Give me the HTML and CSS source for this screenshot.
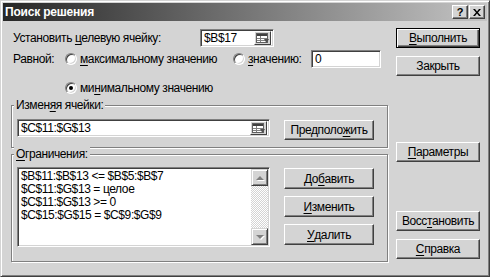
FILE: index.html
```html
<!DOCTYPE html>
<html lang="ru">
<head>
<meta charset="UTF-8">
<title>Поиск решения</title>
<link rel="stylesheet" href="styles.css">
</head>
<body>

<div class="window">
  <div class="titlebar">
    <span class="title">Поиск решения</span>
    <div class="title-buttons">
      <span class="tbtn tbtn-help">?</span>
      <span class="tbtn">
        <svg width="8" height="7" viewBox="0 0 8 7"><path d="M0 0h2l2 2.5L6 0h2L5 3.5 8 7H6L4 4.5 2 7H0l3-3.5z" fill="#000"/></svg>
      </span>
    </div>
  </div>

  <div class="dialog-body">
    <div class="main">
      <div class="row row-target">
        <label class="lbl-target">Установить <u>ц</u>елевую ячейку:</label>
        <div class="field field-target">
          <span class="field-text">$B$17</span>
          <span class="refbtn">
            <svg width="14" height="11" viewBox="0 0 14 11">
              <rect x="0.5" y="0.5" width="11" height="9" fill="#fff" stroke="#606060"/>
              <rect x="1" y="1" width="10" height="2" fill="#404040"/>
              <path d="M1 5.5h10M1 7.5h10M4.5 3v6" stroke="#808080"/>
              <path d="M8 6l5 0-2.5 4z" fill="#505050"/>
            </svg>
          </span>
        </div>
      </div>

      <div class="row row-equal">
        <span class="lbl-equal">Равной:</span>
        <span class="radio"></span>
        <span class="opt opt-max"><u>м</u>аксимальному значению</span>
        <span class="radio"></span>
        <span class="opt opt-value"><u>з</u>начению:</span>
        <div class="field field-value"><span class="field-text">0</span></div>
      </div>

      <div class="row row-min">
        <span class="radio checked"></span>
        <span class="opt">ми<u>н</u>имальному значению</span>
      </div>

      <div class="group group-cells">
        <div class="group-title">Измен<u>я</u>я ячейки:</div>
        <div class="group-row">
          <div class="field field-cells">
            <span class="field-text">$C$11:$G$13</span>
            <span class="refbtn">
              <svg width="14" height="11" viewBox="0 0 14 11">
                <rect x="0.5" y="0.5" width="11" height="9" fill="#fff" stroke="#606060"/>
                <rect x="1" y="1" width="10" height="2" fill="#404040"/>
                <path d="M1 5.5h10M1 7.5h10M4.5 3v6" stroke="#808080"/>
                <path d="M8 6l5 0-2.5 4z" fill="#505050"/>
              </svg>
            </span>
          </div>
          <button class="btn btn-group">Предполо<u>ж</u>ить</button>
        </div>
      </div>

      <div class="group group-limits">
        <div class="group-title"><u>О</u>граничения:</div>
        <div class="group-row">
          <div class="listbox">
            <div class="list-items">
              <div>$B$11:$B$13 &lt;= $B$5:$B$7</div>
              <div>$C$11:$G$13 = целое</div>
              <div>$C$11:$G$13 &gt;= 0</div>
              <div>$C$15:$G$15 = $C$9:$G$9</div>
            </div>
            <div class="scrollbar">
              <span class="sbtn"><span class="arrow-up"></span></span>
              <span class="track"></span>
              <span class="sbtn"><span class="arrow-down"></span></span>
            </div>
          </div>
          <div class="group-buttons">
            <button class="btn btn-group">До<u>б</u>авить</button>
            <button class="btn btn-group"><u>И</u>зменить</button>
            <button class="btn btn-group"><u>У</u>далить</button>
          </div>
        </div>
      </div>
    </div>

    <div class="side">
      <button class="btn btn-side btn-default"><u>В</u>ыполнить</button>
      <button class="btn btn-side btn-close">Закрыть</button>
      <button class="btn btn-side btn-params"><u>П</u>араметры</button>
      <button class="btn btn-side btn-reset">Восс<u>т</u>ановить</button>
      <button class="btn btn-side btn-help"><u>С</u>правка</button>
    </div>
  </div>
</div>

</body>
</html>
```

FILE: styles.css
```css
body {
  margin: 0;
  font-family: "Liberation Sans", Arial, sans-serif;
  font-size: 12px;
  letter-spacing: -0.4px;
  color: #000;
  background: #d4d4d4;
}
u {
  text-decoration-thickness: 1px;
  text-underline-offset: 2px;
}
.window {
  width: 490px;
  height: 277px;
  box-sizing: border-box;
  background: #d4d4d4;
  border: 1px solid;
  border-color: #d4d4d4 #404040 #404040 #d4d4d4;
  box-shadow: inset 1px 1px #fff, inset -1px -1px #808080;
  padding: 2px;
}
.titlebar {
  height: 18px;
  display: flex;
  align-items: center;
  justify-content: space-between;
  padding: 0 2px;
  background: linear-gradient(to right, #262626, #c4c4c4);
}
.title {
  color: #fff;
  font-weight: bold;
  font-size: 12px;
  letter-spacing: -0.2px;
}
.title-buttons {
  display: flex;
  gap: 1px;
}
.tbtn {
  width: 16px;
  height: 14px;
  box-sizing: border-box;
  display: flex;
  align-items: center;
  justify-content: center;
  background: #d4d4d4;
  border: 1px solid;
  border-color: #fff #404040 #404040 #fff;
  box-shadow: inset -1px -1px #808080;
  font-weight: bold;
  font-size: 11px;
  letter-spacing: 0;
}
.dialog-body {
  display: flex;
  padding: 7px 0 0 7px;
}
.main {
  width: 378px;
}
.row {
  display: flex;
  align-items: center;
}
.row-target {
  height: 18px;
  margin-top: 1px;
}
.lbl-target {
  width: 190px;
  padding-left: 3px;
  box-sizing: border-box;
}
.field {
  height: 18px;
  box-sizing: border-box;
  display: flex;
  align-items: center;
  justify-content: space-between;
  background: #fff;
  border: 1px solid;
  border-color: #808080 #fff #fff #808080;
  box-shadow: inset 1px 1px #404040, inset -1px -1px #d4d4d4;
  padding: 0 2px 0 3px;
}
.field-target {
  width: 74px;
}
.field-value {
  width: 70px;
}
.refbtn {
  width: 17px;
  height: 14px;
  box-sizing: border-box;
  display: flex;
  align-items: center;
  justify-content: center;
  background: #d4d4d4;
  border: 1px solid;
  border-color: #fff #404040 #404040 #fff;
}
.row-equal {
  height: 18px;
  margin-top: 3px;
}
.lbl-equal {
  width: 55px;
  padding-left: 3px;
  box-sizing: border-box;
}
.radio {
  width: 12px;
  height: 12px;
  box-sizing: border-box;
  flex: none;
  position: relative;
  border-radius: 50%;
  background: #fff;
  border: 1px solid;
  border-color: #808080 #fff #fff #808080;
  box-shadow: inset 1px 1px #404040, inset -1px -1px #d4d4d4;
}
.radio.checked::after {
  content: "";
  position: absolute;
  left: 3px;
  top: 3px;
  width: 4px;
  height: 4px;
  border-radius: 50%;
  background: #000;
}
.opt {
  margin-left: 3px;
}
.opt-max {
  width: 153px;
}
.opt-value {
  width: 63px;
}
.row-min {
  height: 12px;
  margin-top: 14px;
  padding-left: 55px;
}
.group {
  box-sizing: border-box;
  width: 377px;
  margin-left: 1px;
  border: 1px solid #808080;
  box-shadow: inset 1px 1px #fff, 1px 1px #fff;
}
.group-cells {
  height: 43px;
  margin-top: 11px;
}
.group-limits {
  height: 108px;
  margin-top: 6px;
}
.group-title {
  width: fit-content;
  margin: -8px 0 0 2px;
  padding: 0 2px;
  line-height: 14px;
  background: #d4d4d4;
}
.group-row {
  display: flex;
  align-items: flex-start;
  padding-left: 5px;
}
.group-cells .group-row {
  padding-top: 7px;
}
.group-limits .group-row {
  padding-top: 6px;
}
.field-cells {
  width: 253px;
}
.btn {
  box-sizing: border-box;
  display: flex;
  align-items: center;
  justify-content: center;
  padding: 0;
  font: inherit;
  letter-spacing: inherit;
  color: #000;
  background: #d4d4d4;
  border: 1px solid;
  border-color: #fff #404040 #404040 #fff;
  box-shadow: inset -1px -1px #808080;
}
.btn-group {
  width: 90px;
  height: 21px;
  margin-left: 14px;
}
.group-cells .btn-group {
  margin-top: 1px;
  height: 20px;
}
.listbox {
  width: 253px;
  height: 80px;
  box-sizing: border-box;
  display: flex;
  background: #fff;
  border: 1px solid;
  border-color: #808080 #fff #fff #808080;
  box-shadow: inset 1px 1px #404040, inset -1px -1px #d4d4d4;
  padding: 1px;
}
.list-items {
  flex: 1;
  padding: 1px 0 0 2px;
  line-height: 13px;
}
.scrollbar {
  width: 17px;
  display: flex;
  flex-direction: column;
}
.sbtn {
  height: 17px;
  box-sizing: border-box;
  display: flex;
  align-items: center;
  justify-content: center;
  background: #d4d4d4;
  border: 1px solid;
  border-color: #d4d4d4 #404040 #404040 #d4d4d4;
  box-shadow: inset 1px 1px #fff, inset -1px -1px #808080;
}
.track {
  flex: 1;
  background: repeating-conic-gradient(#fff 0 25%, #d4d4d4 0 50%) 0 0 / 2px 2px;
}
.arrow-up {
  border: 4px solid transparent;
  border-top: 0;
  border-bottom: 4px solid #808080;
  filter: drop-shadow(1px 1px #fff);
}
.arrow-down {
  border: 4px solid transparent;
  border-bottom: 0;
  border-top: 4px solid #808080;
  filter: drop-shadow(1px 1px #fff);
}
.group-buttons {
  display: flex;
  flex-direction: column;
  gap: 7px;
  padding-top: 1px;
}
.side {
  width: 84px;
  margin-left: 8px;
  display: flex;
  flex-direction: column;
}
.btn-side {
  width: 84px;
  height: 20px;
}
.btn-default {
  border-color: #000;
  box-shadow: inset 1px 1px #fff, inset -1px -1px #404040, inset -2px -2px #808080;
}
.btn-close {
  margin-top: 8px;
}
.btn-params {
  margin-top: 66px;
}
.btn-reset {
  margin-top: 49px;
}
.btn-help {
  margin-top: 8px;
}
```
